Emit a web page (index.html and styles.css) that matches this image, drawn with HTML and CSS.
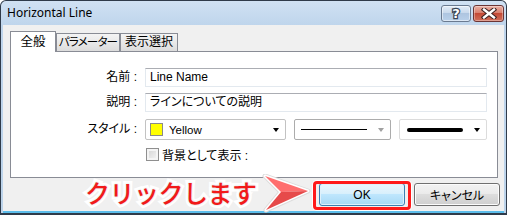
FILE: index.html
```html
<!DOCTYPE html>
<html lang="ja">
<head>
<meta charset="utf-8">
<title>Horizontal Line</title>
<link rel="stylesheet" href="styles.css">
</head>
<body>
<div class="window">
  <div class="titlebar">
    <span class="title">Horizontal Line</span>
    <div class="caption">
      <div class="cbtn help"><span class="qmark">?</span></div>
      <div class="cbtn close">
        <svg width="16" height="11" viewBox="0 0 16 11">
          <path d="M3 1.5 L13 9.5 M13 1.5 L3 9.5" stroke="#3a2020" stroke-width="4.4" stroke-linecap="square" fill="none"/>
          <path d="M3 1.5 L13 9.5 M13 1.5 L3 9.5" stroke="#ffffff" stroke-width="2.4" stroke-linecap="square" fill="none"/>
        </svg>
      </div>
    </div>
  </div>
  <div class="client">
    <div class="tabs">
      <div class="tab active">全般</div>
      <div class="tab">パラメーター</div>
      <div class="tab">表示選択</div>
    </div>
    <div class="panel">
      <div class="form">
        <div class="label">名前 :</div>
        <div class="textbox">Line Name</div>
        <div class="label">説明 :</div>
        <div class="textbox">ラインについての説明</div>
        <div class="label row3">スタイル :</div>
        <div class="combos row3">
          <div class="combo c-color">
            <span class="swatch"></span>
            <span class="ctext">Yellow</span>
            <span class="arrow"></span>
          </div>
          <div class="combo c-line">
            <span class="thin"></span>
            <span class="arrow grey"></span>
          </div>
          <div class="combo c-thick">
            <span class="thick"></span>
            <span class="arrow"></span>
          </div>
        </div>
        <div class="label row4"></div>
        <div class="check row4"><span class="box"></span><span>背景として表示 :</span></div>
      </div>
    </div>
    <div class="footer">
      <div class="btn ok">OK</div>
      <div class="btn">キャンセル</div>
    </div>
  </div>
  <div class="callout">クリックします</div>
  <svg class="pointer" width="50" height="40" viewBox="0 0 50 40">
    <path d="M3 2 L46 17 L4 36 L19 18 Z" fill="none" stroke="#dcdcdc" stroke-width="5" stroke-linejoin="round"/>
    <path d="M3 2 L46 17 L4 36 L19 18 Z" fill="none" stroke="#ffffff" stroke-width="3" stroke-linejoin="round"/>
    <path d="M3 2 L46 17 L19 18 Z" fill="#ff6e6e"/>
    <path d="M19 18 L46 17 L4 36 Z" fill="#e64a4a"/>
  </svg>
  <div class="highlight"></div>
</div>
</body>
</html>
```

FILE: styles.css
```css
html, body {
  margin: 0;
  padding: 0;
  background: #ffffff;
}
body {
  width: 509px;
  height: 215px;
  overflow: hidden;
  font-family: "Liberation Sans", "Noto Sans CJK JP", sans-serif;
  font-size: 12px;
  color: #000;
}
.window {
  position: relative;
  width: 507px;
  height: 215px;
  box-sizing: border-box;
  border: 1px solid #2f3b4a;
  border-bottom-width: 2px;
  border-radius: 6px 6px 0 0;
  background: linear-gradient(#d0e1f3, #bfd5ec 24px, #bcd3ea);
  padding: 0 2px;
  display: flex;
  flex-direction: column;
}
.titlebar {
  height: 24px;
  flex: none;
  display: flex;
  align-items: flex-start;
}
.title {
  padding-left: 4px;
  line-height: 24px;
  font-family: "Noto Sans", sans-serif;
  font-size: 12px;
  color: #000;
}
.caption {
  margin-left: auto;
  margin-top: 4px;
  display: flex;
  gap: 2px;
}
.cbtn {
  height: 17px;
  box-sizing: border-box;
  border-radius: 3px;
  display: flex;
  align-items: center;
  justify-content: center;
}
.help {
  width: 30px;
  border: 1px solid #6a7a90;
  background: linear-gradient(#e3edf8, #c9d9ec 45%, #aec5e0 50%, #b9d0ea);
  box-shadow: inset 0 0 0 1px rgba(255,255,255,0.5);
}
.qmark {
  font-family: "DejaVu Sans", sans-serif;
  font-weight: bold;
  font-size: 13px;
  line-height: 15px;
  color: #fff;
  -webkit-text-stroke: 2.5px #3a4656;
  paint-order: stroke fill;
}
.close {
  width: 31px;
  border: 1px solid #6b3535;
  background: linear-gradient(#eab0a4, #d9806f 45%, #c44a36 50%, #d0705c);
  box-shadow: inset 0 0 0 1px rgba(255,255,255,0.35);
}
.client {
  flex: 1;
  background: #f0f0f0;
  border-bottom: 2px solid #5cbdea;
  padding: 6px 6px 0 7px;
  display: flex;
  flex-direction: column;
  font-family: "Liberation Sans", "Noto Sans CJK JP", sans-serif;
  font-feature-settings: "palt" 1;
}
.tabs {
  height: 20px;
  flex: none;
  display: flex;
  align-items: flex-end;
}
.tab {
  height: 18px;
  box-sizing: border-box;
  border: 1px solid #898c95;
  border-bottom: none;
  background: linear-gradient(#f4f4f4, #e9e9e9 50%, #dcdcdc);
  font-size: 12px;
  line-height: 17px;
  text-align: center;
  white-space: nowrap;
  overflow: visible;
}
.tab:nth-child(2) { width: 64px; letter-spacing: -0.8px; font-size: 11.5px; }
.tab:nth-child(3) { width: 58px; }
.tab.active {
  width: 46px;
  height: 21px;
  margin-bottom: -1px;
  background: #ffffff;
  position: relative;
  z-index: 1;
  line-height: 20px;
  font-size: 12.5px;
}
.panel {
  height: 127px;
  flex: none;
  box-sizing: border-box;
  border: 1px solid #898c95;
  background: #ffffff;
  padding: 16px 10px 0 0;
}
.form {
  display: grid;
  grid-template-columns: 126px 342px;
  column-gap: 8px;
  row-gap: 6px;
  align-items: center;
}
.label {
  text-align: right;
  font-size: 12px;
  line-height: 19px;
}
.textbox {
  height: 19px;
  box-sizing: border-box;
  border: 1px solid #e3e9ef;
  border-top-color: #abadb3;
  padding-left: 4px;
  font-size: 12px;
  line-height: 17px;
}
.row3 { margin-top: 1px; }
.row4 { margin-top: 1px; }
.combos {
  display: flex;
  gap: 8px;
}
.combo {
  height: 21px;
  box-sizing: border-box;
  border: 1px solid #c2c2c2;
  border-radius: 2px;
  background: #fff;
  display: flex;
  align-items: center;
  position: relative;
}
.c-color { width: 141px; padding-left: 4px; }
.c-line { width: 97px; border-color: #acacac; padding-left: 6px; }
.c-thick { width: 88px; border-color: #dcdcdc; padding-left: 7px; }
.swatch {
  width: 13px;
  height: 13px;
  box-sizing: border-box;
  background: #ffff00;
  border: 1px solid #8a8a8a;
}
.ctext {
  margin-left: 6px;
  font-size: 11.5px;
}
.arrow {
  margin-left: auto;
  margin-right: 6px;
  width: 0;
  height: 0;
  border-left: 3.5px solid transparent;
  border-right: 3.5px solid transparent;
  border-top: 4px solid #000;
}
.arrow.grey { border-top-color: #a0a0a0; }
.thin {
  width: 66px;
  height: 1px;
  background: #000;
}
.thick {
  width: 56px;
  height: 4px;
  border-radius: 2px;
  background: #000;
}
.check {
  height: 14px;
  display: flex;
  align-items: center;
  gap: 3px;
  font-size: 12px;
  margin-left: 1px;
}
.box {
  width: 13px;
  height: 13px;
  box-sizing: border-box;
  border: 1px solid #8f8f8f;
  background: linear-gradient(135deg, #d2d2d2, #f6f6f6);
  box-shadow: inset 0 0 0 2px #f4f4f4;
}
.footer {
  margin-top: 5px;
  margin-right: -2px;
  display: flex;
  justify-content: flex-end;
  gap: 9px;
}
.btn {
  width: 86px;
  height: 23px;
  box-sizing: border-box;
  border: 1px solid #707070;
  border-radius: 3px;
  background: linear-gradient(#f2f2f2, #ebebeb 45%, #dddddd 50%, #cfcfcf);
  box-shadow: inset 0 0 0 1px #fcfcfc;
  display: flex;
  align-items: center;
  justify-content: center;
  font-size: 12px;
}
.btn.ok {
  border-color: #3c7fb1;
  background: linear-gradient(#eaf6fd, #d9f0fc 45%, #bee6fd 50%, #a7d9f5);
  box-shadow: inset 0 0 0 1px #dff1fb;
}
.callout {
  position: absolute;
  left: 84px;
  top: 176px;
  font-family: "Noto Sans CJK JP", sans-serif;
  font-weight: 500;
  font-size: 25px;
  line-height: 30px;
  letter-spacing: -0.5px;
  color: #f21a1a;
  -webkit-text-stroke: 6px #ffffff;
  paint-order: stroke fill;
  text-shadow: 0 0 2px #c8c8c8;
}
.pointer {
  position: absolute;
  left: 261px;
  top: 173px;
}
.highlight {
  position: absolute;
  left: 312px;
  top: 180px;
  width: 98px;
  height: 29px;
  box-sizing: border-box;
  border: 3px solid #ff1a1a;
  border-radius: 4px;
  box-shadow: 0 0 0 1px #ffffff;
}
```
